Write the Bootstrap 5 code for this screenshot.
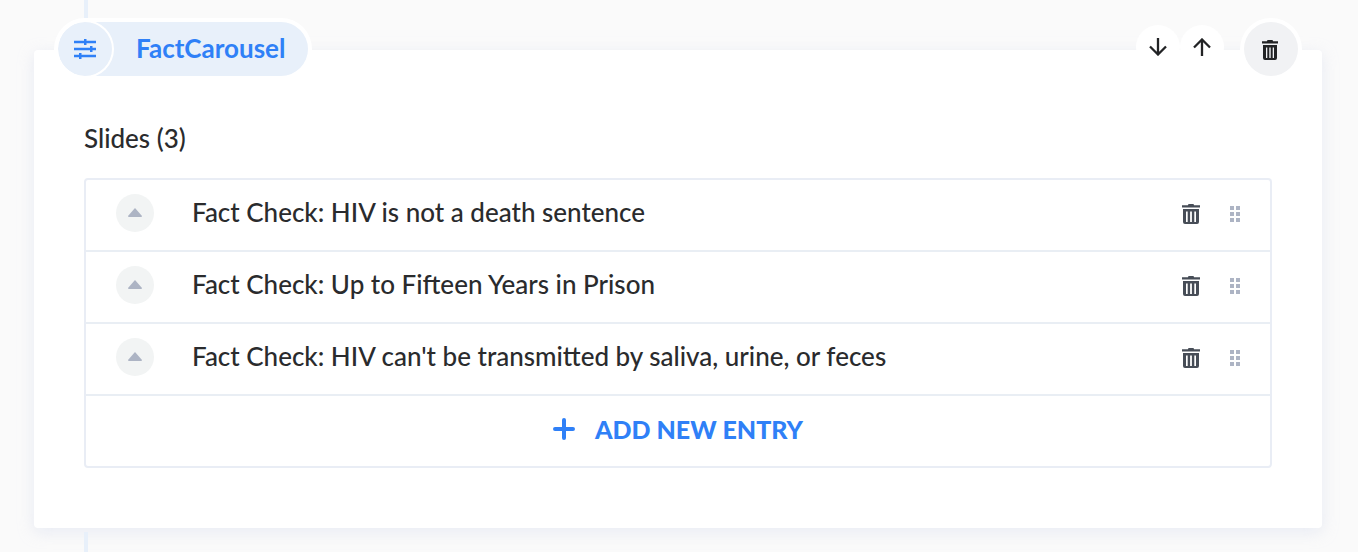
<!DOCTYPE html>
<html lang="en">
<head>
<meta charset="utf-8">
<meta name="viewport" content="width=device-width, initial-scale=1">
<title>FactCarousel</title>
<link href="https://cdn.jsdelivr.net/npm/bootstrap@5.3.0/dist/css/bootstrap.min.css" rel="stylesheet">
<style>
  body { background: #fafafa; color: #2a2b2d; font-family: Lato, "Liberation Sans", sans-serif; font-size: 26px; font-weight: 500; line-height: 32px; }
  .slice-page { padding: 0 36px 0 34px; }
  .connector { width: 4px; height: 50px; margin-left: 50px; background: #e8f0fa; }
  .connector-end { height: 20px; margin-top: 4px; }
  .slice-panel { background: #fff; border-radius: 4px; box-shadow: 0 4px 16px rgba(205, 213, 235, .4); padding: 0 24px 60px; }
  .slice-head { margin-top: -28px; }
  .slice-tag { height: 54px; padding-right: 23px; border-radius: 27px; background: #e8f0fa; box-shadow: 0 0 0 4px #fff; color: #2f80f7; font-weight: 700; }
  .slice-tag .tag-icon { width: 54px; height: 54px; margin-right: 24px; box-shadow: 0 0 0 2px #fff; }
  .label-text { padding-bottom: 2px; }
  .round-btn { padding: 0; border: 0; color: #222325; background: #fff; }
  .move-btn { width: 44px; height: 44px; }
  .delete-btn { width: 54px; height: 54px; margin-left: 20px; padding: 2px 2px 0 0; background: #f1f2f4; box-shadow: 0 0 0 4px #fff; }
  .slides { padding: 0 26px; margin-top: 46px; }
  .slides h2 { font-size: 26px; font-weight: 500; line-height: 32px; margin: 0 0 24px; }
  .slide-list { border: 2px solid #e9edf5; border-radius: 4px; }
  .slide-row { height: 72px; padding: 0 30px 4px; border-bottom: 2px solid #e9eef4; }
  .toggle-btn { width: 38px; height: 38px; margin-right: 38px; padding-bottom: 2px; background: #f2f4f4; }
  .bare-btn { padding: 2px 0 0; border: 0; background: none; color: #474d57; }
  .drag-btn { color: #adb4c4; margin-left: 30px; cursor: grab; }
  .add-btn { height: 70px; border: 0; background: none; color: #2f80f7; font-size: 25px; font-weight: 900; padding: 0 0 4px; gap: 20px; }
</style>
</head>
<body>
<svg class="d-none" aria-hidden="true">
  <symbol id="trash" viewBox="0 0 18 20">
    <path fill="currentColor" d="M0 1.300h6Q6 0 7 0h4q1 0 1 1.300h6V3.500H0z"/>
    <path fill="currentColor" fill-rule="evenodd" d="M1 5h16v13q0 2-2 2H3q-2 0-2-2zM4 7.500V18h1.700V7.500zM8.100 7.500V18h1.800V7.500zM12.300 7.500V18H14V7.500z"/>
  </symbol>
  <symbol id="dots" viewBox="0 0 10 16">
    <path fill="currentColor" d="M0 0h4v4H0zM6 0h4v4H6zM0 6h4v4H0zM6 6h4v4H6zM0 12h4v4H0zM6 12h4v4H6z"/>
  </symbol>
  <symbol id="caret" viewBox="0 0 14 9">
    <path fill="#adb4c4" d="M7 0L14 8Q14 9 13 9H1Q0 9 0 8z"/>
  </symbol>
</svg>
<main class="slice-page">
  <div class="connector"></div>
  <section class="slice-panel d-flex flex-column">
    <header class="slice-head d-flex align-items-start justify-content-between">
      <div class="slice-tag d-flex align-items-center">
        <span class="tag-icon rounded-circle d-flex align-items-center justify-content-center">
          <svg width="22" height="20" viewBox="0 0 22 20" fill="currentColor" aria-hidden="true"><path d="M0 1.700h22v2.600H0zM0 8.700h22v2.600H0zM0 15.700h22v2.600H0zM10 0h2.500v6H10zM16 7h2.500v6H16zM5 14h2.500v6H5z"/></svg>
        </span>
        <span class="label-text">FactCarousel</span>
      </div>
      <div class="d-flex align-items-center">
        <div class="d-flex pb-1">
          <button type="button" class="round-btn move-btn rounded-circle d-flex align-items-center justify-content-center" aria-label="Move down">
            <svg width="18" height="18" viewBox="0 0 18 18" fill="none" stroke="currentColor" stroke-width="2.300"><path d="M9 0v16.500M1 8.500l8 8 8-8"/></svg>
          </button>
          <button type="button" class="round-btn move-btn rounded-circle d-flex align-items-center justify-content-center" aria-label="Move up">
            <svg width="18" height="18" viewBox="0 0 18 18" fill="none" stroke="currentColor" stroke-width="2.300"><path d="M9 18V1.500M1 9.500l8-8 8 8"/></svg>
          </button>
        </div>
        <button type="button" class="round-btn delete-btn rounded-circle d-flex align-items-center justify-content-center" aria-label="Delete component">
          <svg width="16" height="20" viewBox="0 0 16 20" fill="currentColor"><path d="M0 1.300h5Q5 0 6 0h4q1 0 1 1.300h5V3.500H0z"/><path fill-rule="evenodd" d="M1 5h14v13q0 2-2 2H3q-2 0-2-2zM4 7.500V18h1.300V7.500zM7.300 7.500V18h1.400V7.500zM10.700 7.500V18H12V7.500z"/></svg>
        </button>
      </div>
    </header>
    <div class="slides">
      <h2>Slides (3)</h2>
      <div class="slide-list">
        <div class="slide-row d-flex align-items-center">
          <button type="button" class="round-btn toggle-btn rounded-circle d-flex align-items-center justify-content-center" aria-label="Collapse"><svg width="14" height="9"><use href="#caret"/></svg></button>
          <span class="label-text flex-grow-1">Fact Check: HIV is not a death sentence</span>
          <button type="button" class="bare-btn d-flex" aria-label="Delete slide"><svg width="18" height="20"><use href="#trash"/></svg></button>
          <button type="button" class="bare-btn drag-btn d-flex" aria-label="Reorder slide"><svg width="10" height="16"><use href="#dots"/></svg></button>
        </div>
        <div class="slide-row d-flex align-items-center">
          <button type="button" class="round-btn toggle-btn rounded-circle d-flex align-items-center justify-content-center" aria-label="Collapse"><svg width="14" height="9"><use href="#caret"/></svg></button>
          <span class="label-text flex-grow-1">Fact Check: Up to Fifteen Years in Prison</span>
          <button type="button" class="bare-btn d-flex" aria-label="Delete slide"><svg width="18" height="20"><use href="#trash"/></svg></button>
          <button type="button" class="bare-btn drag-btn d-flex" aria-label="Reorder slide"><svg width="10" height="16"><use href="#dots"/></svg></button>
        </div>
        <div class="slide-row d-flex align-items-center">
          <button type="button" class="round-btn toggle-btn rounded-circle d-flex align-items-center justify-content-center" aria-label="Collapse"><svg width="14" height="9"><use href="#caret"/></svg></button>
          <span class="label-text flex-grow-1">Fact Check: HIV can't be transmitted by saliva, urine, or feces</span>
          <button type="button" class="bare-btn d-flex" aria-label="Delete slide"><svg width="18" height="20"><use href="#trash"/></svg></button>
          <button type="button" class="bare-btn drag-btn d-flex" aria-label="Reorder slide"><svg width="10" height="16"><use href="#dots"/></svg></button>
        </div>
        <button type="button" class="add-btn w-100 d-flex align-items-center justify-content-center">
          <svg width="22" height="22" viewBox="0 0 22 22" fill="none" stroke="currentColor" stroke-width="4" stroke-linecap="round" aria-hidden="true"><path d="M11 2v18M2 11h18"/></svg>
          <span>ADD NEW ENTRY</span>
        </button>
      </div>
    </div>
  </section>
  <div class="connector connector-end"></div>
</main>
<script src="https://cdn.jsdelivr.net/npm/bootstrap@5.3.0/dist/js/bootstrap.bundle.min.js"></script>
</body>
</html>
